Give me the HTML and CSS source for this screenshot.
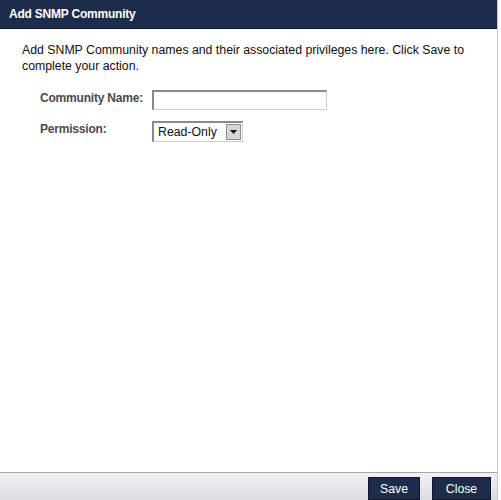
FILE: index.html
```html
<!DOCTYPE html>
<html>
<head>
<meta charset="utf-8">
<link rel="stylesheet" href="styles.css">
</head>
<body>
<div class="dialog">
  <div class="titlebar">Add SNMP Community</div>
  <div class="content">
    <p class="intro">Add SNMP Community names and their associated privileges here. Click Save to complete your action.</p>
    <div class="form">
      <div class="row">
        <label class="label">Community Name:</label>
        <div class="textbox"></div>
      </div>
      <div class="row">
        <label class="label">Permission:</label>
        <div class="select">
          <span class="select-value">Read-Only</span>
          <span class="select-btn"><svg width="7" height="4" viewBox="0 0 7 4"><path d="M0 0H7L3.5 4Z" fill="#111"/></svg></span>
        </div>
      </div>
    </div>
  </div>
  <div class="footer">
    <button class="btn btn-save">Save</button>
    <button class="btn btn-close">Close</button>
  </div>
</div>
</body>
</html>
```
FILE: styles.css
```css
html, body {
  margin: 0;
  padding: 0;
  background: #ffffff;
}
body {
  font-family: "Liberation Sans", Arial, sans-serif;
  font-size: 12px;
  color: #111;
}
.dialog {
  width: 497px;
  height: 500px;
  border-right: 1px solid #c4c4d2;
  display: flex;
  flex-direction: column;
  box-sizing: content-box;
}
.titlebar {
  height: 28px;
  background: #1e2c4b;
  color: #ffffff;
  font-weight: bold;
  font-size: 12px;
  letter-spacing: -0.22px;
  line-height: 28px;
  padding-left: 9px;
  border-bottom: 1px solid #0e1528;
}
.content {
  flex: 1;
  padding: 13px 0 0 22px;
}
.intro {
  margin: 0;
  width: 455px;
  font-size: 12.3px;
  line-height: 16px;
  color: #111;
}
.form {
  margin-top: 16px;
  padding-left: 18px;
  display: flex;
  flex-direction: column;
  gap: 11px;
}
.row {
  display: flex;
  align-items: flex-start;
}
.label {
  width: 112px;
  font-weight: bold;
  font-size: 12px;
  letter-spacing: -0.2px;
  color: #4a4a4a;
  line-height: 17px;
}
.textbox {
  width: 172px;
  height: 17px;
  border-style: solid;
  border-width: 2px 1px 1px 2px;
  border-color: #8a8a8a #cfcfcf #cfcfcf #8a8a8a;
  background: #fff;
}
.select {
  width: 88px;
  height: 18px;
  border-style: solid;
  border-width: 2px 1px 1px 2px;
  border-color: #8a8a8a #cfcfcf #cfcfcf #8a8a8a;
  display: flex;
  align-items: center;
  justify-content: space-between;
  box-sizing: content-box;
}
.select-value {
  padding-left: 4px;
  font-size: 12.3px;
  color: #111;
}
.select-btn {
  width: 15px;
  height: 16px;
  margin-right: 1px;
  background: #d6d6d6;
  border: 1px solid #8e8e8e;
  display: flex;
  align-items: center;
  justify-content: center;
  box-sizing: border-box;
}
.footer {
  height: 27px;
  border-top: 1px solid #a9a9a9;
  background: linear-gradient(#f2f2f4, #dcdce0);
  display: flex;
  justify-content: flex-end;
  align-items: flex-end;
  gap: 12px;
  padding-right: 6px;
}
.btn {
  height: 23px;
  background: #1e2c4b;
  color: #ffffff;
  border: 1px solid #0f1830;
  font-family: "Liberation Sans", Arial, sans-serif;
  font-size: 12.3px;
  padding: 0;
  margin: 0;
}
.btn-save {
  width: 52px;
}
.btn-close {
  width: 59px;
}
```
